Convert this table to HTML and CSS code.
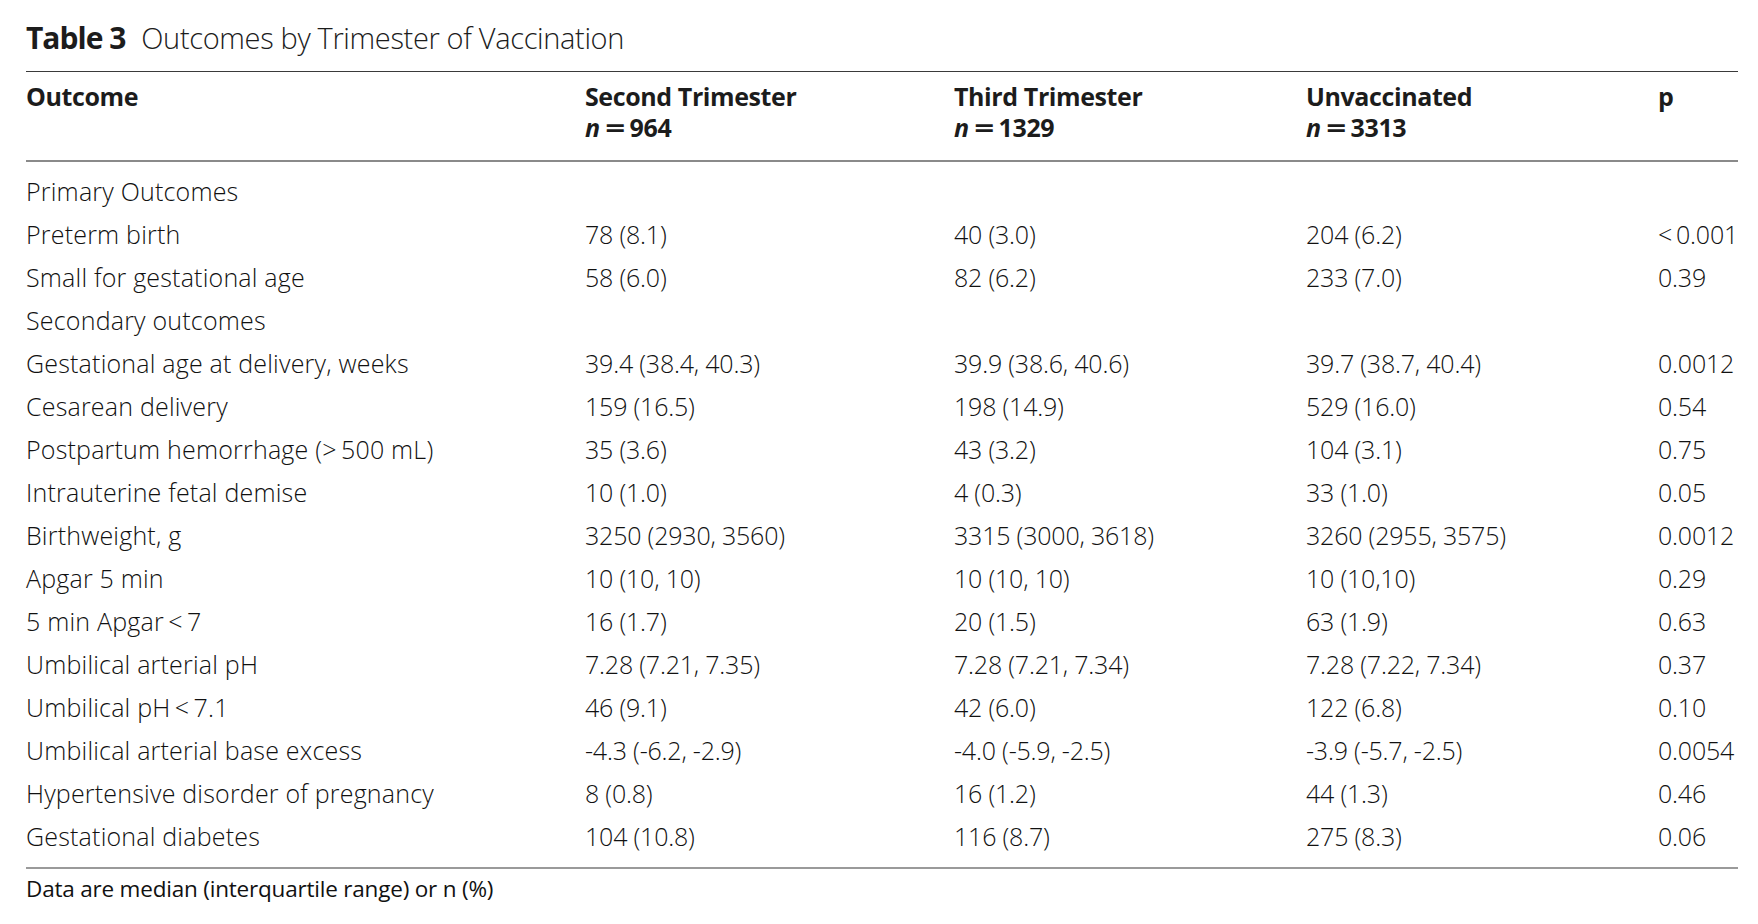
FILE: index.html
```html
<!DOCTYPE html>
<html lang="en">
<head>
<meta charset="utf-8">
<title>Table 3 Outcomes by Trimester of Vaccination</title>
<link rel="stylesheet" href="styles.css">
</head>
<body>
<div class="page">
  <h1 class="caption"><span class="label">Table 3</span><span class="title">Outcomes by Trimester of Vaccination</span></h1>
  <table class="data">
    <colgroup>
      <col class="c-outcome"><col class="c-num"><col class="c-num2"><col class="c-num2"><col class="c-p">
    </colgroup>
    <thead>
      <tr>
        <th>Outcome</th>
        <th>Second Trimester<br><i>n</i><span class="eq">=</span>964</th>
        <th>Third Trimester<br><i>n</i><span class="eq">=</span>1329</th>
        <th>Unvaccinated<br><i>n</i><span class="eq">=</span>3313</th>
        <th>p</th>
      </tr>
    </thead>
    <tbody>
      <tr class="first"><td>Primary Outcomes</td><td></td><td></td><td></td><td></td></tr>
      <tr><td>Preterm birth</td><td>78 (8.1)</td><td>40 (3.0)</td><td>204 (6.2)</td><td>&lt;&#8201;0.001</td></tr>
      <tr><td>Small for gestational age</td><td>58 (6.0)</td><td>82 (6.2)</td><td>233 (7.0)</td><td>0.39</td></tr>
      <tr><td>Secondary outcomes</td><td></td><td></td><td></td><td></td></tr>
      <tr><td>Gestational age at delivery, weeks</td><td>39.4 (38.4, 40.3)</td><td>39.9 (38.6, 40.6)</td><td>39.7 (38.7, 40.4)</td><td>0.0012</td></tr>
      <tr><td>Cesarean delivery</td><td>159 (16.5)</td><td>198 (14.9)</td><td>529 (16.0)</td><td>0.54</td></tr>
      <tr><td>Postpartum hemorrhage (&gt;&#8201;500 mL)</td><td>35 (3.6)</td><td>43 (3.2)</td><td>104 (3.1)</td><td>0.75</td></tr>
      <tr><td>Intrauterine fetal demise</td><td>10 (1.0)</td><td>4 (0.3)</td><td>33 (1.0)</td><td>0.05</td></tr>
      <tr><td>Birthweight, g</td><td>3250 (2930, 3560)</td><td>3315 (3000, 3618)</td><td>3260 (2955, 3575)</td><td>0.0012</td></tr>
      <tr><td>Apgar 5 min</td><td>10 (10, 10)</td><td>10 (10, 10)</td><td>10 (10,10)</td><td>0.29</td></tr>
      <tr><td>5 min Apgar&#8201;&lt;&#8201;7</td><td>16 (1.7)</td><td>20 (1.5)</td><td>63 (1.9)</td><td>0.63</td></tr>
      <tr><td>Umbilical arterial pH</td><td>7.28 (7.21, 7.35)</td><td>7.28 (7.21, 7.34)</td><td>7.28 (7.22, 7.34)</td><td>0.37</td></tr>
      <tr><td>Umbilical pH&#8201;&lt;&#8201;7.1</td><td>46 (9.1)</td><td>42 (6.0)</td><td>122 (6.8)</td><td>0.10</td></tr>
      <tr><td>Umbilical arterial base excess</td><td>-4.3 (-6.2, -2.9)</td><td>-4.0 (-5.9, -2.5)</td><td>-3.9 (-5.7, -2.5)</td><td>0.0054</td></tr>
      <tr><td>Hypertensive disorder of pregnancy</td><td>8 (0.8)</td><td>16 (1.2)</td><td>44 (1.3)</td><td>0.46</td></tr>
      <tr class="last"><td>Gestational diabetes</td><td>104 (10.8)</td><td>116 (8.7)</td><td>275 (8.3)</td><td>0.06</td></tr>
    </tbody>
  </table>
  <p class="footnote">Data are median (interquartile range) or n (%)</p>
</div>
</body>
</html>
```

FILE: styles.css
```css
html, body {
  margin: 0;
  padding: 0;
  background: #ffffff;
}

body {
  font-family: "Open Sans", "Noto Sans", "Liberation Sans", sans-serif;
  color: #1c1c1c;
}

.page {
  padding: 20px 20px 0 26px;
}

.caption {
  margin: 0 0 15px 0;
  font-size: 29px;
  line-height: 36px;
  font-weight: 300;
  letter-spacing: -0.35px;
  white-space: nowrap;
}

.caption .label {
  font-weight: 700;
  font-size: 30px;
  letter-spacing: -1px;
  margin-right: 16px;
}

.data {
  width: 1712px;
  border-collapse: collapse;
  table-layout: fixed;
  border-top: 1px solid #3a3a3a;
  border-bottom: 2px solid #9a9a9a;
}

.c-outcome { width: 559px; }
.c-num { width: 369px; }
.c-num2 { width: 352px; }
.c-p { width: 80px; }

.data th {
  text-align: left;
  vertical-align: top;
  font-size: 25px;
  line-height: 31px;
  font-weight: 700;
  letter-spacing: -0.4px;
  padding: 9px 0 17px 0;
  border-bottom: 2px solid #8a8a8a;
  white-space: nowrap;
}

.data th i {
  font-style: italic;
}

.data th .eq {
  display: inline-block;
  margin: 0 8px;
  transform: scaleX(1.4);
}

.data td {
  font-size: 25px;
  line-height: 43px;
  font-weight: 300;
  letter-spacing: -0.2px;
  padding: 0;
  white-space: nowrap;
  vertical-align: top;
  color: #111;
}

.data td:first-child {
  letter-spacing: 0.2px;
}

.data tr.first td {
  padding-top: 8px;
}

.data tr.last td {
  padding-bottom: 9px;
}

.footnote {
  margin: 7px 0 0 0;
  font-size: 22.5px;
  line-height: 26px;
  letter-spacing: -0.2px;
  color: #111;
}
```
